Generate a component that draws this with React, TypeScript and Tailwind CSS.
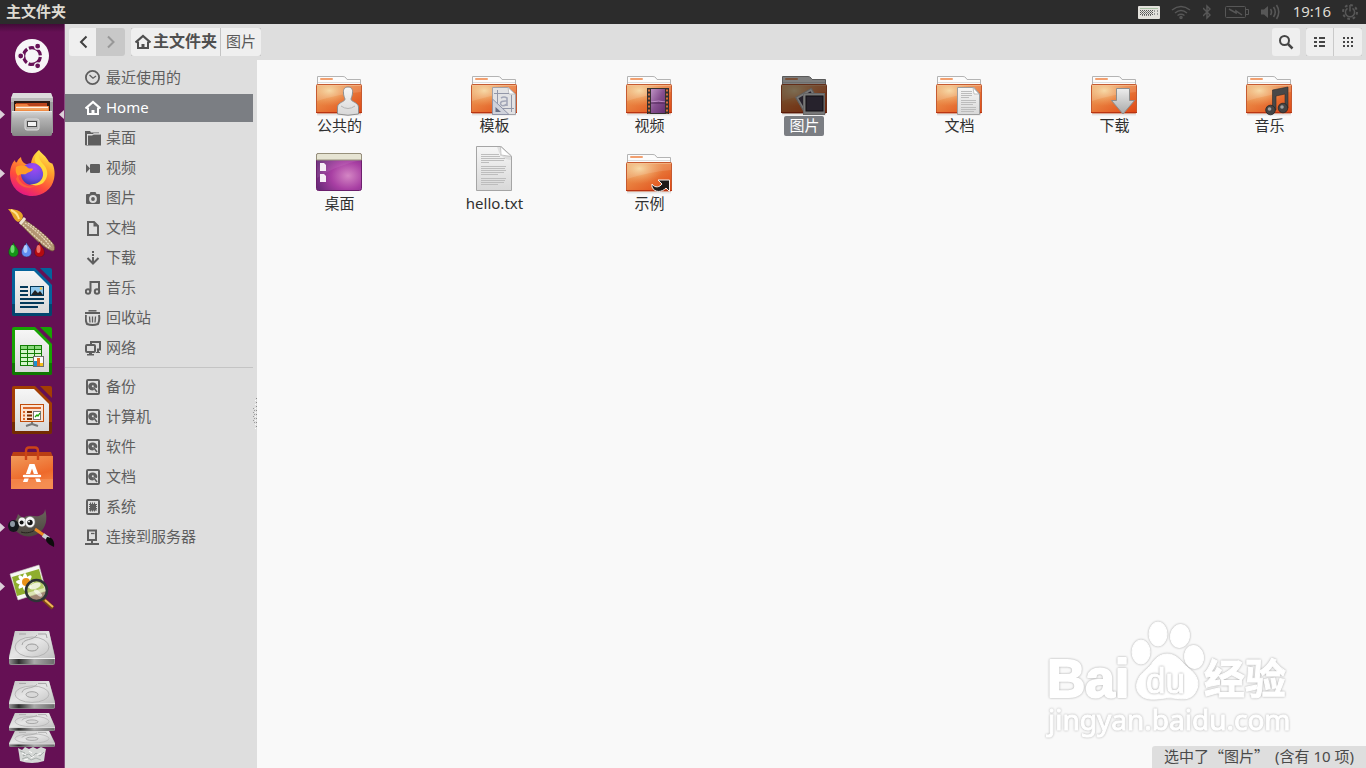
import React from "react";

/* ---------- shared helpers ---------- */

type Children = { children: React.ReactNode };

function Big({ children }: Children) {
  return (
    <svg viewBox="0 0 48 48" className="h-12 w-12 shrink-0" aria-hidden="true">
      {children}
    </svg>
  );
}

function Small({ children }: Children) {
  return (
    <svg viewBox="0 0 16 16" className="h-4 w-4 shrink-0" fill="none" stroke="currentColor" strokeWidth="2" aria-hidden="true">
      {children}
    </svg>
  );
}

function Defs() {
  return (
    <svg className="absolute h-0 w-0" aria-hidden="true">
      <defs>
        <linearGradient id="folder" x1="0" y1="0" x2="0.9" y2="1">
          <stop offset="0" stopColor="#eab06a" />
          <stop offset="0.45" stopColor="#e9803f" />
          <stop offset="1" stopColor="#e04a17" />
        </linearGradient>
        <radialGradient id="folderGlow" cx="0.28" cy="0.2" r="0.55">
          <stop offset="0" stopColor="#f6d49a" />
          <stop offset="1" stopColor="#f0a060" stopOpacity="0" />
        </radialGradient>
        <linearGradient id="paper" x1="0" y1="0" x2="0" y2="1">
          <stop offset="0" stopColor="#f6f6f6" />
          <stop offset="1" stopColor="#d8d8d8" />
        </linearGradient>
        <linearGradient id="metal" x1="0" y1="0" x2="0" y2="1">
          <stop offset="0" stopColor="#ededed" />
          <stop offset="1" stopColor="#a9a9a9" />
        </linearGradient>
        <linearGradient id="cabinet" x1="0" y1="0" x2="0" y2="1">
          <stop offset="0" stopColor="#d6d6d6" />
          <stop offset="0.3" stopColor="#b4b4b4" />
          <stop offset="1" stopColor="#868686" />
        </linearGradient>
        <linearGradient id="edge" x1="0" y1="0" x2="1" y2="0">
          <stop offset="0" stopColor="#8a8a8a" />
          <stop offset="0.2" stopColor="#2e2e2e" />
          <stop offset="0.55" stopColor="#aaaaaa" />
          <stop offset="1" stopColor="#6d6d6d" />
        </linearGradient>
        <radialGradient id="desk" cx="0.7" cy="0.6" r="0.75">
          <stop offset="0" stopColor="#d486c4" />
          <stop offset="0.5" stopColor="#a83fa3" />
          <stop offset="1" stopColor="#682a78" />
        </radialGradient>
        <linearGradient id="fox" x1="0.8" y1="0" x2="0.3" y2="1">
          <stop offset="0" stopColor="#fff44f" />
          <stop offset="0.35" stopColor="#ffa02c" />
          <stop offset="0.7" stopColor="#ff4a3d" />
          <stop offset="1" stopColor="#e31587" />
        </linearGradient>
        <radialGradient id="globe" cx="0.6" cy="0.2" r="0.9">
          <stop offset="0" stopColor="#a248f5" />
          <stop offset="0.6" stopColor="#6a4be0" />
          <stop offset="1" stopColor="#3b2f9b" />
        </radialGradient>
        <linearGradient id="bag" x1="0" y1="0" x2="0.4" y2="1">
          <stop offset="0" stopColor="#f19a5a" />
          <stop offset="0.7" stopColor="#ee6a2b" />
          <stop offset="1" stopColor="#f2803f" />
        </linearGradient>
        <linearGradient id="drive" x1="0" y1="0" x2="1" y2="1">
          <stop offset="0" stopColor="#c4c4c4" />
          <stop offset="0.5" stopColor="#e6e6e6" />
          <stop offset="1" stopColor="#c0c0c0" />
        </linearGradient>
        <linearGradient id="fur" x1="0" y1="0" x2="0" y2="1">
          <stop offset="0" stopColor="#6b655c" />
          <stop offset="1" stopColor="#4a453e" />
        </linearGradient>
        <linearGradient id="film" x1="0" y1="0" x2="1" y2="1">
          <stop offset="0" stopColor="#bd93c4" />
          <stop offset="0.5" stopColor="#86508f" />
          <stop offset="1" stopColor="#643070" />
        </linearGradient>
      </defs>
    </svg>
  );
}

/* ---------- launcher icons ---------- */

const UbuntuIcon = () => (
  <Big>
    <circle cx="24" cy="24" r="17" fill="#f7f5f7" />
    <circle cx="24" cy="24" r="8.4" fill="none" stroke="#671157" strokeWidth="3.2" strokeDasharray="15.6 2" strokeDashoffset="-1" />
    {[60, 180, 300].map((a) => {
      const r = (a * Math.PI) / 180;
      return <circle key={a} cx={24 + 11.3 * Math.cos(r)} cy={24 + 11.3 * Math.sin(r)} r="3" fill="#671157" stroke="#f7f5f7" strokeWidth="1.2" />;
    })}
  </Big>
);

const FilesIcon = () => (
  <Big>
    <path d="M5 2H43L45 8V42H3V8Z" fill="#9c9c9c" />
    <path d="M5 2H43L45 7H3Z" fill="#dcdcdc" />
    <rect x="3" y="7" width="42" height="4" fill="#b9b9b9" />
    <rect x="6" y="10" width="36" height="12" fill="#2a1a14" />
    <path d="M8 12H39V16H8Z" fill="#b8441c" />
    <path d="M7 13H19L21 15H41V20H7Z" fill="#ee7f3c" />
    <path d="M8 16.500H40" stroke="#fdf3e4" strokeWidth="1.600" />
    <path d="M8 18.500H40" stroke="#f0a557" strokeWidth="1.600" />
    <path d="M4 20H44V43Q44 45 42 45H6Q4 45 4 43Z" fill="url(#cabinet)" />
    <path d="M4 20.500H44" stroke="#e9e9e9" />
    <rect x="17" y="28" width="14" height="11" rx="2" fill="#b9b9b9" stroke="#dedede" />
    <rect x="19.500" y="30.500" width="9" height="5" fill="#f3f3f3" stroke="#4a4a4a" />
  </Big>
);

const FirefoxIcon = () => (
  <Big>
    <path d="M31 0C34 4 38 6 41 12C43 13 44 14 44 13C47 18 47 25 46 29C44 39 35 46 24 46C12 46 2 37 2 24C2 18 4 13 7 10C7 12 8 13 9 12C10 9 12 8 13 7C13 10 15 13 18 14L23 15C23 8 27 3 31 0Z" fill="url(#fox)" />
    <circle cx="24" cy="24" r="11" fill="url(#globe)" />
    <path d="M31 1C30 7 32 11 36 15C41 21 40 28 35 33C31 36 26 36 22 34C29 35 34 31 35 26C36 19 32 16 29 14C25 11 27 5 31 1Z" fill="#ffd93c" />
    <path d="M8 17C12 15 18 15 20 18C22 19 24 18 25 19C24 22 20 22 18 24C15 25 13 23 10 26C8 24 7 20 8 17Z" fill="#ff9f26" />
    <path d="M10 25C11 33 18 38 27 36C21 40 11 37 8 29Z" fill="#ff6a35" opacity="0.8" />
  </Big>
);

const BrushIcon = () => (
  <Big>
    <path d="M14 9C23 15 39 26 46 36Q48 42 44 42C35 39 21 24 12 15Z" fill="#b39672" stroke="#6d4e37" strokeWidth="0.800" />
    <path d="M17 14C26 20 37 29 43 39M15 16C23 24 33 33 41 39M20 14C29 20 39 28 45 36" stroke="#ead9bd" strokeWidth="1.200" fill="none" strokeDasharray="2 1" />
    <path d="M12 15L17 9" stroke="#eee3d2" strokeWidth="3" />
    <path d="M0 0C6 0 14 1 15 7Q14 12 10 13C5 11 5 5 0 0Z" fill="#e7a528" />
    <path d="M3 1C8 3 10 6 11 10" stroke="#ffe18a" strokeWidth="2" fill="none" />
    {[
      [5.500, "#149416", "#8cf08c"],
      [18.500, "#5f8df2", "#cfe4ff"],
      [31.500, "#b50b10", "#ff8f86"],
    ].map(([x, c, h]) => (
      <g key={String(c)} transform={`translate(${x} 33)`}>
        <path d="M0 0C1 4 5 6 5 10C5 13 3 15 0 15S-5 13-5 10C-5 6-1 4 0 0Z" fill={String(c)} stroke="#3b1235" strokeWidth="0.500" />
        <ellipse cx="-1" cy="7" rx="2" ry="4" fill={String(h)} opacity="0.750" />
      </g>
    ))}
  </Big>
);

function OfficeIcon({ color, dark, children }: { color: string; dark: string } & Children) {
  return (
    <Big>
      <path d="M6 0H27L44 17V46Q44 48 42 48H6Q4 48 4 46V2Q4 0 6 0Z" fill={color} />
      <path d="M4 36H44V46Q44 48 42 48H6Q4 48 4 46Z" fill={dark} opacity="0.600" />
      <path d="M7 3H26L41 18V45H7Z" fill="url(#paper)" />
      <path d="M32 0H42Q44 0 44 2V12Z" fill={color} />
      {children}
    </Big>
  );
}

const WriterIcon = () => (
  <OfficeIcon color="#04639b" dark="#023350">
    <path d="M12 19H20M12 23H20M12 27H20M12 31H36M12 35H36M12 39H30" stroke="#04395a" strokeWidth="2" />
    <rect x="22.500" y="18.500" width="13" height="9" fill="#8fc8ec" stroke="#04395a" />
    <path d="M23 27L27 22L30 25L32 23L35 27Z" fill="#222" />
    <circle cx="33" cy="20.500" r="1.300" fill="#f4c542" />
  </OfficeIcon>
);

const CalcIcon = () => (
  <OfficeIcon color="#18a303" dark="#0b5a02">
    <rect x="12.500" y="18.500" width="21" height="20" fill="#d4f5ca" stroke="#127d05" />
    <rect x="13" y="19" width="20" height="3" fill="#8ad97c" />
    <path d="M12 22.500H34M12 26.500H34M12 30.500H34M12 34.500H34M19.500 18V39M26.500 18V39" stroke="#127d05" />
    <rect x="25.500" y="29.500" width="10" height="10" fill="#fafafa" stroke="#6c6c6c" />
    <path d="M27.500 39V34" stroke="#1b8fd0" strokeWidth="3" />
    <path d="M30.500 39V31" stroke="#e06a1b" strokeWidth="3" />
    <path d="M33.500 39V36" stroke="#f2bf1b" strokeWidth="3" />
  </OfficeIcon>
);

const ImpressIcon = () => (
  <OfficeIcon color="#a33e03" dark="#541f01">
    <path d="M24 35V38L18 40M24 38L30 40" stroke="#777" strokeWidth="2" fill="none" />
    <rect x="12.500" y="18.500" width="23" height="17" fill="#fbe3d2" stroke="#c14c0a" />
    <path d="M15 22H33" stroke="#d9662b" strokeWidth="2" />
    <path d="M15 26H17M15 29.500H17M15 33H17" stroke="#d9662b" strokeWidth="2" />
    <path d="M19 26H24M19 29.500H24M19 33H24" stroke="#7c2d02" strokeWidth="2" />
    <rect x="25.500" y="25.500" width="7" height="8" fill="#fff" stroke="#777" />
    <path d="M27 31L29 29L30 30L32 27" stroke="#18a303" strokeWidth="1.300" fill="none" />
  </OfficeIcon>
);

const SoftwareIcon = () => (
  <Big>
    <path d="M5 7H43L45 12H3Z" fill="#b93e14" />
    <path d="M3 11H45V44H3Z" fill="url(#bag)" />
    <path d="M3 34H45V44H3Z" fill="#f79a63" opacity="0.500" />
    <path d="M18 15V6Q18 2.500 21 2.500H27Q30 2.500 30 6V15" fill="none" stroke="#cc4417" strokeWidth="2.400" />
    <path d="M21.500 19H26.500L33 37H28.500L24 23.500L19.500 37H15Z" fill="#fff" />
    <path d="M15 29H33V33.500H15Z" fill="#ee6a2b" />
    <path d="M16 31H32" stroke="#fff" strokeWidth="2.400" strokeLinecap="round" />
  </Big>
);

const GimpIcon = () => (
  <Big>
    <path d="M10 10C12 12 14 14 17 13C22 10 29 14 33 11C36 10 37 7 37 5C40 15 38 24 31 29C23 35 11 33 6 24C4 18 9 16 10 10Z" fill="url(#fur)" />
    <ellipse cx="5.500" cy="22" rx="5.500" ry="6" fill="#14181c" />
    <ellipse cx="4.500" cy="20" rx="2.500" ry="3" fill="#8d98a3" />
    <ellipse cx="14" cy="18" rx="3.700" ry="4.500" fill="#f4f4f4" />
    <circle cx="13.600" cy="18.600" r="2" fill="#111" />
    <ellipse cx="22" cy="18" rx="5" ry="5.500" fill="#fafafa" stroke="#888" strokeWidth="0.500" />
    <circle cx="22" cy="18.500" r="2.700" fill="#111" />
    <circle cx="21" cy="17.500" r="0.900" fill="#fff" />
    <path d="M13 28C19 30 25 28 28 25" stroke="#25211d" fill="none" />
    <path d="M27 25L37 32" stroke="#ec8a24" strokeWidth="3" />
    <path d="M35 31L41 35" stroke="#c9ced1" strokeWidth="4" />
    <path d="M39 33C44 33 47 37 46 43C42 41 38 39 38 35Z" fill="#0c0c0c" />
  </Big>
);

const ViewerIcon = () => (
  <Big>
    <path d="M2 11L31 2L38 28L10 37Z" fill="#f7f7f4" stroke="#c8c8c0" strokeWidth="0.600" />
    <path d="M4 14L31 6L36 25L9 33Z" fill="#8fae2e" />
    <g fill="#fff">
      {[0, 45, 90, 135].map((a) => (
        <ellipse key={a} cx="17" cy="19" rx="9" ry="2.700" transform={`rotate(${a} 17 19)`} />
      ))}
    </g>
    <circle cx="18" cy="19" r="4" fill="#e99218" />
    <path d="M35 36L45 45" stroke="#7c4a14" strokeWidth="4" />
    <path d="M37 37L45 44" stroke="#f0b65a" strokeWidth="2" />
    <circle cx="28.500" cy="27.500" r="10.500" fill="#c9d98a" fillOpacity="0.600" stroke="#2d3336" strokeWidth="2.600" />
    <ellipse cx="27" cy="23" rx="6" ry="3" fill="#fff" opacity="0.750" transform="rotate(-20 27 23)" />
    <ellipse cx="30" cy="30" rx="5" ry="2" fill="#fff" opacity="0.600" transform="rotate(40 30 30)" />
  </Big>
);

const DriveShape = () => (
  <>
    <path d="M6 0H40L46 25V32Q46 34 44 34H2Q0 34 0 32V25Z" fill="#8e8e8e" />
    <path d="M6 0H40L46 27H0Z" fill="url(#drive)" />
    <ellipse cx="23" cy="16" rx="17" ry="10" fill="none" stroke="#b4b4b4" />
    <ellipse cx="23" cy="16.500" rx="6" ry="3.500" fill="#d9d9d9" stroke="#999" />
    <path d="M10 3H17M29 3H37L38 7M13 14C14 7 24 10 28 4" stroke="#a5a5a5" fill="none" />
    <path d="M1 28H45V32Q45 33 44 33H2Q1 33 1 32Z" fill="url(#edge)" />
    <path d="M0 27.500H46" stroke="#f2f2f2" />
  </>
);

const DriveIcon = () => (
  <Big>
    <g transform="translate(1 9)">
      <DriveShape />
    </g>
  </Big>
);

const launcher = [
  { name: "Dash", Icon: UbuntuIcon, running: false, focused: false },
  { name: "文件", Icon: FilesIcon, running: true, focused: true },
  { name: "Firefox", Icon: FirefoxIcon, running: true, focused: false },
  { name: "画笔", Icon: BrushIcon, running: false, focused: false },
  { name: "Writer", Icon: WriterIcon, running: false, focused: false },
  { name: "Calc", Icon: CalcIcon, running: false, focused: false },
  { name: "Impress", Icon: ImpressIcon, running: false, focused: false },
  { name: "软件中心", Icon: SoftwareIcon, running: false, focused: false },
  { name: "GIMP", Icon: GimpIcon, running: true, focused: false },
  { name: "图像查看器", Icon: ViewerIcon, running: true, focused: false },
  { name: "磁盘", Icon: DriveIcon, running: false, focused: false },
];

function Launcher() {
  return (
    <nav aria-label="启动器" className="flex w-[65px] shrink-0 flex-col items-center overflow-hidden border-r border-[#884a7e] bg-[#651054] bg-linear-to-b from-[#430a38] from-0% to-[#651054] to-[8px] pt-[2px]">
      {launcher.map(({ name, Icon, running, focused }) => (
        <button key={name} aria-label={name} className="relative flex h-[59px] w-full shrink-0 justify-center pt-[6px]">
          {running && (
            <svg viewBox="0 0 5 9" className="absolute top-[25px] left-0 h-[9px] w-[5px]" aria-hidden="true">
              <path d="M0 0L5 4.500L0 9Z" fill="#dccfd9" />
            </svg>
          )}
          <Icon />
          {focused && (
            <svg viewBox="0 0 5 9" className="absolute top-[25px] right-0 h-[9px] w-[5px]" aria-hidden="true">
              <path d="M5 0L0 4.500L5 9Z" fill="#dccfd9" />
            </svg>
          )}
        </button>
      ))}
      <button aria-label="磁盘 2" className="shrink-0 pt-[6px]">
        <svg viewBox="0 0 46 34" preserveAspectRatio="none" className="h-[28px] w-[46px]"><DriveShape /></svg>
      </button>
      <button aria-label="磁盘 3" className="shrink-0 pt-1">
        <svg viewBox="0 0 46 34" preserveAspectRatio="none" className="h-[18px] w-[46px]"><DriveShape /></svg>
      </button>
      <button aria-label="磁盘 4" className="shrink-0">
        <svg viewBox="0 0 46 34" preserveAspectRatio="none" className="h-[16px] w-[46px]"><DriveShape /></svg>
      </button>
      <button aria-label="回收站" className="shrink-0">
        <svg viewBox="0 0 30 16" className="h-[16px] w-[30px]">
          <path d="M1 1L5 3L8 0L12 2L16 0L20 2L24 0L29 2L28 7L27 14Q15 18 3 14L2 7Z" fill="#d5d8d6" />
          <path d="M3 4L8 6L6 9L12 7L15 10L19 6L23 9L27 5M5 12L10 10L14 13L19 11L24 13" stroke="#a9afad" fill="none" />
          <path d="M5 6L9 8M12 4L15 6M20 8L24 6M14 11L17 9M7 13L11 12" stroke="#fff" fill="none" />
        </svg>
      </button>
    </nav>
  );
}

/* ---------- top panel ---------- */

function TopPanel() {
  return (
    <header className="flex h-6 shrink-0 items-center bg-[#2c2c2c] px-[6px] text-[15px] leading-[22px] text-[#dfdbd2]">
      <h1 className="pb-[2px] font-bold">主文件夹</h1>
      <div className="ml-auto flex items-center text-[#575757]">
        <svg viewBox="0 0 22 13" className="mr-[11px] h-[13px] w-[22px]" aria-label="键盘">
          <rect width="22" height="13" rx="1" fill="#e3e1dc" />
          <path d="M2 4.500H15M2 6.500H15M2 8.500H15" stroke="#555" strokeDasharray="1 1" />
          <path d="M3 5.500H15M3 7.500H15M4 9.500H13" stroke="#777" strokeDasharray="1 1" />
          <path d="M16.500 4V10M19.500 4V10" stroke="#999" strokeDasharray="2 1" />
          <path d="M2 2.500H20" stroke="#a9c2a5" />
        </svg>
        <svg viewBox="0 0 20 16" className="mr-[12px] h-[16px] w-[20px]" fill="none" stroke="currentColor" strokeWidth="1.500" aria-label="无线">
          <path d="M1 6Q10-1 19 6M4 9Q10 4 16 9M6.500 11.500Q10 9 13.500 11.500" />
          <circle cx="10" cy="13.500" r="1" />
        </svg>
        <svg viewBox="0 0 8 16" className="mr-[14px] h-[16px] w-[8px]" fill="none" stroke="currentColor" strokeWidth="1.500" aria-label="蓝牙">
          <path d="M0 4L7 11L4 14V2L7 5L0 12" />
        </svg>
        <svg viewBox="0 0 24 12" className="mr-[12px] h-[12px] w-[24px]" fill="none" stroke="currentColor" aria-label="电池">
          <rect x="0.500" y="0.500" width="20" height="11" rx="1" />
          <path d="M21 3.500H23.500V8.500H21" />
          <path d="M4 3L11 7V5L17 9" strokeWidth="1.500" />
        </svg>
        <svg viewBox="0 0 20 16" className="mr-[12px] h-[16px] w-[20px]" fill="none" stroke="currentColor" aria-label="音量">
          <path d="M0 5.500H3L7 2V14L3 10.500H0Z" fill="currentColor" stroke="none" />
          <path d="M9.500 5Q11.500 8 9.500 11M12.500 3Q16 8 12.500 13M15.500 1Q20 8 15.500 15" strokeWidth="1.600" />
        </svg>
        <time className="mr-[11px] pb-[2px] text-[#dfdbd2]">19:16</time>
        <svg viewBox="0 0 16 16" className="mr-[2px] h-[16px] w-[16px]" fill="none" stroke="currentColor" aria-label="系统">
          <circle cx="8" cy="8" r="7" strokeWidth="2" strokeDasharray="2.700 2.800" />
          <path d="M5.500 4.300A4.600 4.600 0 1 0 10.500 4.300M8 1V7.500" strokeWidth="1.500" />
        </svg>
      </div>
    </header>
  );
}

/* ---------- symbolic icons ---------- */

const homeIcon = (
  <Small>
    <path d="M0.500 8.500L8 2L15.500 8.500" strokeWidth="2.300" />
    <path d="M3 7.500V14H13V7.500" />
    <path d="M6.500 15V10H9.500V15Z" fill="currentColor" stroke="none" />
  </Small>
);
const diskIcon = (
  <Small>
    <rect x="2" y="1" width="12" height="14" rx="1" />
    <path d="M8 3.500A4 4 0 1 0 9 11L8.500 8.500L12 9A4 4 0 0 0 8 3.500Z" fill="currentColor" stroke="none" />
    <circle cx="7.800" cy="7.300" r="1" fill="#dedede" stroke="none" />
    <path d="M9 9L12 13" strokeWidth="1.500" />
  </Small>
);

type Place = { key: string; label: string; icon: React.ReactNode; current?: boolean };

const places: Place[] = [
  {
    key: "recent",
    label: "最近使用的",
    icon: (
      <Small>
        <circle cx="7.500" cy="7.500" r="6.600" strokeWidth="1.800" />
        <path d="M4.500 5L8 8.200L11 6" strokeWidth="1.300" />
      </Small>
    ),
  },
  { key: "home", label: "Home", icon: homeIcon, current: true },
  {
    key: "desktop",
    label: "桌面",
    icon: (
      <Small>
        <path d="M0 1H5L6 2.500H14V4H2V15H0Z" fill="currentColor" stroke="none" />
        <path d="M3 5H7L8 4.500H16V15.500H0.500V5Z" fill="currentColor" stroke="none" />
        <path d="M2.500 15V5H7.500L8.500 3.700H15" stroke="#dedede" strokeWidth="1" />
      </Small>
    ),
  },
  {
    key: "videos",
    label: "视频",
    icon: (
      <Small>
        <rect x="5" y="4" width="10" height="9" rx="1" fill="currentColor" stroke="none" />
        <path d="M1 4L5 8.500L1 13Z" fill="currentColor" stroke="none" />
      </Small>
    ),
  },
  {
    key: "pictures",
    label: "图片",
    icon: (
      <Small>
        <path d="M2 4H4.500L5.500 2H10.500L11.500 4H14Q15 4 15 5V13Q15 14 14 14H2Q1 14 1 13V5Q1 4 2 4Z" fill="currentColor" stroke="none" />
        <circle cx="8" cy="9" r="2.900" stroke="#dedede" strokeWidth="2" />
      </Small>
    ),
  },
  {
    key: "documents",
    label: "文档",
    icon: (
      <Small>
        <path d="M3 2H9L13 6V15H3Z" />
        <path d="M8.500 2V6.500H13Z" fill="currentColor" stroke="none" />
      </Small>
    ),
  },
  {
    key: "downloads",
    label: "下载",
    icon: (
      <Small>
        <path d="M8 1V7" strokeDasharray="2 1" />
        <path d="M8 7V13M2.500 8L8 13.500L13.500 8" />
      </Small>
    ),
  },
  {
    key: "music",
    label: "音乐",
    icon: (
      <Small>
        <circle cx="3" cy="11.500" r="2.200" />
        <circle cx="12" cy="11.500" r="2.200" />
        <path d="M5.500 11.500V2H14V11.500" />
      </Small>
    ),
  },
  {
    key: "trash",
    label: "回收站",
    icon: (
      <Small>
        <path d="M0 3H15" />
        <path d="M3.500 0.800H11.500" strokeWidth="1.500" />
        <path d="M1 5Q0 10 2 14Q7.500 16 13 14Q15 10 14 5" strokeWidth="2" />
        <path d="M4.500 6.500L5 12.500M7.500 6.500V12.500M10.500 6.500L10 12.500" strokeWidth="1.300" />
      </Small>
    ),
  },
  {
    key: "network",
    label: "网络",
    icon: (
      <Small>
        <path d="M6 4V2H15V9.500H12" />
        <rect x="1" y="5" width="9" height="7" rx="1" />
        <path d="M4 13H7V14H9V15.500H2V14H4ZM12 10H14V12H15V13H11V12H12Z" fill="currentColor" stroke="none" />
      </Small>
    ),
  },
];

const devices: Place[] = [
  { key: "backup", label: "备份", icon: diskIcon },
  { key: "computer", label: "计算机", icon: diskIcon },
  { key: "soft", label: "软件", icon: diskIcon },
  { key: "docs", label: "文档", icon: diskIcon },
  {
    key: "system",
    label: "系统",
    icon: (
      <Small>
        <rect x="2" y="1" width="12" height="14" rx="1" />
        <rect x="5" y="5" width="6" height="6" fill="currentColor" stroke="none" />
        <path d="M5.500 3.500V12.500M7.500 3.500V12.500M9.500 3.500V12.500M4 5.500H12M4 7.500H12M4 9.500H12M4 11H12" strokeWidth="1.100" />
      </Small>
    ),
  },
  {
    key: "server",
    label: "连接到服务器",
    icon: (
      <Small>
        <path d="M3 1.500H11V11H3ZM7 11V14M0 15H14" />
        <path d="M6 4.500H9.500" strokeWidth="1.300" />
      </Small>
    ),
  },
];

function PlaceList({ items }: { items: Place[] }) {
  return (
    <ul className="flex flex-col gap-[2px]">
      {items.map(({ key, label, icon, current }) => (
        <li key={key}>
          <button
            aria-current={current ? "page" : undefined}
            className={
              current
                ? "flex h-7 w-full items-center gap-[5px] bg-[#7b7e83] pl-5 text-white"
                : "flex h-7 w-full items-center gap-[5px] pl-5 text-[#5e5e5e]"
            }
          >
            {icon}
            <span className="pb-[2px]">{label}</span>
          </button>
        </li>
      ))}
    </ul>
  );
}

function Sidebar() {
  return (
    <aside className="flex w-[192px] shrink-0 bg-[#dedede] text-[15px] leading-5">
      <nav aria-label="位置" className="flex-1 pt-1">
        <PlaceList items={places} />
        <hr className="mt-[5px] mb-[5px] border-[#c4c4c4]" />
        <PlaceList items={devices} />
      </nav>
      <svg viewBox="0 0 4 34" className="h-[34px] w-1 shrink-0 self-center" aria-hidden="true">
        <path d="M3.500 1V33" stroke="#8c8c8c" strokeDasharray="1 3" />
        <path d="M2.500 3V33" stroke="#fafafa" strokeDasharray="1 3" />
        <path d="M0.500 11V24M1.500 13V26" stroke="#9b9b9b" strokeDasharray="1 3" />
      </svg>
    </aside>
  );
}

/* ---------- toolbar ---------- */

function Toolbar() {
  return (
    <div className="flex h-9 shrink-0 items-center bg-[#dedede] px-1 text-[15px] text-[#5a5a5a]">
      <div className="flex">
        <button aria-label="后退" className="flex h-7 w-[27px] items-center justify-center rounded-l-[3px] bg-[#efefef] pl-[2px] text-[#404040]">
          <Small>
            <path d="M10.500 2.500L5 8L10.500 13.500" />
          </Small>
        </button>
        <button aria-label="前进" disabled className="flex h-7 w-[29px] items-center justify-center rounded-r-[3px] bg-[#c8c8c8] text-[#989898]">
          <Small>
            <path d="M5 2.500L10.500 8L5 13.500" />
          </Small>
        </button>
      </div>
      <nav aria-label="路径" className="ml-[6px] flex gap-px bg-[#c4c4c4]">
        <button className="flex h-7 items-center gap-[2px] rounded-l-[3px] bg-[#efefef] pr-[3px] pl-1 text-[16px] font-bold text-[#4f4f4f]">
          {homeIcon}
          <span className="pb-[2px]">主文件夹</span>
        </button>
        <button className="flex h-7 items-center rounded-r-[3px] bg-[#efefef] px-[5px] pb-[2px]">图片</button>
      </nav>
      <button aria-label="搜索" className="ml-auto flex h-7 w-7 items-center justify-center rounded-[3px] bg-[#efefef] text-[#454545]">
        <Small>
          <circle cx="6.500" cy="6.500" r="4.500" />
          <path d="M10 10L14.500 14.500" strokeWidth="2.500" />
        </Small>
      </button>
      <div className="ml-[6px] flex gap-px bg-[#cacaca]">
        <button aria-label="列表视图" className="flex h-7 w-[27px] items-center justify-center rounded-l-[3px] bg-[#efefef] text-[#454545]">
          <Small>
            <path d="M2 4H5M7 4H13M2 8H5M7 8H13M2 12H5M7 12H13" />
          </Small>
        </button>
        <button aria-label="图标视图" className="flex h-7 w-7 items-center justify-center rounded-r-[3px] bg-[#efefef] text-[#454545]">
          <Small>
            <path d="M3 4H13M3 8H13M3 12H13" strokeDasharray="2 2" />
          </Small>
        </button>
      </div>
    </div>
  );
}

/* ---------- files ---------- */

function Folder({ children }: { children?: React.ReactNode }) {
  return (
    <Big>
      <path d="M2 46.500H46" stroke="#000" opacity="0.080" strokeWidth="2" />
      <path d="M2.500 17V8.500H28Q30 8.500 31 10L32 11.500H45.500V17Z" fill="#fcfcfc" stroke="#b4b4b4" />
      <path d="M3 14.500H45" stroke="#dcdcdc" />
      <rect x="5" y="10" width="13" height="2" rx="1" fill="#f2a070" />
      <rect x="1.500" y="16.500" width="45" height="28.500" rx="1" fill="url(#folder)" stroke="#c65a30" />
      <rect x="2" y="17" width="44" height="28" fill="url(#folderGlow)" />
      <path d="M2 17H46V24Q24 26 2 33Z" fill="#fff" opacity="0.130" />
      <path d="M2 17.500H46" stroke="#f6c59a" opacity="0.600" />
      <path d="M1 44.500H47" stroke="#b93412" />
      {children}
    </Big>
  );
}

const PublicIcon = () => (
  <Folder>
    <path d="M33 19C36.500 19 38 21.500 37.500 25C37.300 28 36.500 29 36 31C36 34 43 34 43.500 39V46Q33 48.500 22.500 46V39C23 34 30 34 30 31C29.500 29 28.500 28 28.500 25C28 21.500 29.500 19 33 19Z" fill="url(#paper)" stroke="#8e8e8e" />
    <path d="M26 38Q33 43 40 38" stroke="#b5b5b5" fill="none" />
  </Folder>
);

const TemplatesIcon = () => (
  <Folder>
    <path d="M22.500 19.500H38L45.500 26V46.500H22.500Z" fill="#e2e2e4" stroke="#a2a2a8" />
    <path d="M38 19.500L45 26H39Z" fill="#fff" stroke="#b5b5b8" strokeWidth="0.800" />
    <path d="M27.500 22V43M41.500 27V44M24 25.500H39M27 40.500H44" stroke="#9397a8" />
    <path d="M31 30Q34 28 37 30V38M37 33Q30 32.500 30.500 36Q32 39.500 37 36" stroke="#a3a7b8" strokeWidth="1.600" fill="none" />
    <path d="M22.500 31L39 46.500H22.500Z" fill="#cfd2db" stroke="#8f94a8" />
    <path d="M25.500 39L31 44H25.500Z" fill="#6a7086" />
  </Folder>
);

const VideosIcon = () => (
  <Folder>
    <rect x="22" y="20" width="22" height="26" fill="#35302f" />
    <path d="M24 21.500V46M42 21.500V46" stroke="#d8713d" strokeWidth="2" strokeDasharray="2 2" />
    <rect x="26" y="21" width="14" height="24" fill="url(#film)" />
    <path d="M26 34Q34 32 40 34" stroke="#d3a6d8" fill="none" opacity="0.700" />
    <path d="M26 35H40" stroke="#4c2554" />
  </Folder>
);

const PicturesIcon = () => (
  <Folder>
    <g transform="rotate(-30 27 31)">
      <rect x="18" y="24" width="18" height="16" fill="#f0f0f0" stroke="#bbb" />
      <rect x="20" y="26" width="14" height="12" fill="#4c4358" />
    </g>
    <rect x="23.500" y="25.500" width="21" height="21" fill="#f0f0f0" stroke="#ccc" />
    <rect x="26" y="28" width="17" height="15" fill="#4c4358" stroke="#1c1a20" />
  </Folder>
);

const DocumentsIcon = () => (
  <Folder>
    <path d="M22.500 19.500H39L44.500 26V46.500H22.500Z" fill="url(#paper)" stroke="#9e9e9e" />
    <path d="M38 19.500L44 26H39Z" fill="#fff" stroke="#aaa" strokeWidth="0.700" />
    <path d="M26 23.500H37M26 25.500H37M26 27.500H37M26 29.500H34M26 32.500H41M26 34.500H41M26 36.500H38M26 39.500H41M26 41.500H41M26 43.500H39" stroke="#bcbcbc" />
  </Folder>
);

const DownloadsIcon = () => (
  <Folder>
    <path d="M26.500 20.500H39.500V32.500H44.500L33 46L21.500 32.500H26.500Z" fill="url(#metal)" stroke="#8d8d8d" />
  </Folder>
);

const MusicIcon = () => (
  <Folder>
    <path d="M27.500 22L43 19V40H40V26L31 28V42H27.500Z" fill="#484848" stroke="#2c2c2c" strokeWidth="0.600" />
    <circle cx="25.500" cy="42" r="4.800" fill="#454545" stroke="#262626" strokeWidth="0.800" />
    <circle cx="38" cy="40" r="4.800" fill="#454545" stroke="#262626" strokeWidth="0.800" />
    <circle cx="24.500" cy="41" r="1.800" fill="#a0a0a0" />
    <circle cx="37" cy="39" r="1.800" fill="#a0a0a0" />
  </Folder>
);

const DesktopIcon = () => (
  <Big>
    <rect x="1.500" y="7.500" width="45" height="37" rx="2" fill="url(#desk)" stroke="#6c1f6d" />
    <path d="M2 32V14H46Q20 20 2 32Z" fill="#fff" opacity="0.080" />
    <path d="M1.500 14V9Q1.500 7.500 3 7.500H45Q46.500 7.500 46.500 9V14Z" fill="#e6e4d3" stroke="#97917c" />
    <path d="M5 17H9L11 19V25H5ZM5 28H9L11 30V36H5Z" fill="#f6edf6" />
  </Big>
);

const TextFileIcon = () => (
  <Big>
    <path d="M6.500 0.500H31L41.500 10V44.500H6.500Z" fill="url(#paper)" stroke="#a5a5a5" />
    <path d="M30 1V10H41V14Q30 13 27 1Z" fill="#bbb" opacity="0.350" />
    <path d="M30.500 0.500L41.500 10.500L31 9Z" fill="#fff" stroke="#b5b5b5" strokeWidth="0.800" />
    <path d="M11 8.500H29M11 10.500H30M11 12.500H35M11 14.500H34M11 16.500H19M11 20.500H36M11 22.500H35M11 24.500H36M11 26.500H34M11 28.500H28M11 32.500H36M11 34.500H35M11 36.500H34M11 38.500H28" stroke="#bdbdbd" />
  </Big>
);

const ExamplesIcon = () => (
  <Folder>
    <path d="M33 34H44.500V45.500L41 42C37 46.500 29.500 47 27 41V38C30 42.500 35 41 37 38Z" fill="#1d1a19" stroke="#f5f0ed" strokeWidth="1" />
  </Folder>
);

const files = [
  { name: "公共的", Icon: PublicIcon },
  { name: "模板", Icon: TemplatesIcon },
  { name: "视频", Icon: VideosIcon },
  { name: "图片", Icon: PicturesIcon, selected: true },
  { name: "文档", Icon: DocumentsIcon },
  { name: "下载", Icon: DownloadsIcon },
  { name: "音乐", Icon: MusicIcon },
  { name: "桌面", Icon: DesktopIcon },
  { name: "hello.txt", Icon: TextFileIcon },
  { name: "示例", Icon: ExamplesIcon },
];

function FileGrid() {
  return (
    <div className="grid grid-cols-[repeat(auto-fill,154px)] gap-x-px gap-y-[10px] pt-2 pl-[5px]">
      {files.map(({ name, Icon, selected }) => (
        <button key={name} aria-pressed={!!selected} className="flex flex-col items-center">
          <span className={selected ? "brightness-50" : ""}>
            <Icon />
          </span>
          <span
            className={
              selected
                ? "h-5 rounded-[2px] bg-[#7b7e83] pr-1 pl-[5px] text-[15px] leading-[18px] text-white"
                : "h-5 pr-1 pl-[5px] text-[15px] leading-[18px] text-[#303030]"
            }
          >
            {name}
          </span>
        </button>
      ))}
    </div>
  );
}

function Watermark() {
  return (
    <svg
      viewBox="0 0 260 130"
      className="pointer-events-none absolute right-[64px] bottom-[22px] h-[130px] w-[260px] font-['Noto_Sans','Noto_Sans_CJK_SC',sans-serif]"
      fill="#ffffff"
      stroke="#ffffff"
      strokeWidth="2"
      strokeLinejoin="round"
    >
      <text x="5" y="81" fontSize="53" fontWeight="700" fontFamily="Liberation Sans" className="[filter:drop-shadow(0_0_1px_#a8a8a8)]">Bai</text>
      <g strokeWidth="1" className="[filter:drop-shadow(0_0_1px_#a8a8a8)]">
        <ellipse cx="99" cy="36" rx="9" ry="12" />
        <ellipse cx="116" cy="18" rx="9" ry="12" />
        <ellipse cx="138" cy="20" rx="9.500" ry="11.500" transform="rotate(10 138 20)" />
        <ellipse cx="152" cy="41" rx="9.500" ry="11.500" transform="rotate(-10 152 41)" />
        <path d="M125 38C135 38 139 46 146 52C156 59 158 68 154 75C150 85 139 83 131 82C122 81 116 84 108 83C97 82 92 73 96 64C99 56 107 53 111 46Q117 38 125 38Z" />
      </g>
      <text x="104" y="77" fontSize="35" fontFamily="Liberation Sans" strokeWidth="1" className="[filter:drop-shadow(0_0_1px_#a0a0a0)]">du</text>
      <text x="162" y="78" fontSize="41" fontWeight="700" fontFamily="Noto Sans CJK SC" strokeWidth="1" className="[filter:drop-shadow(0_0_1px_#a8a8a8)]">经验</text>
      <text x="6" y="114" fontSize="28" strokeWidth="1" className="[filter:drop-shadow(0_0_1px_#b0b0b0)]">jingyan.baidu.com</text>
    </svg>
  );
}

export default function App() {
  return (
    <div lang="zh-CN" className="flex h-screen flex-col overflow-hidden font-['Noto_Sans','Noto_Sans_CJK_SC',sans-serif]">
      <Defs />
      <TopPanel />
      <div className="flex min-h-0 flex-1">
        <Launcher />
        <div className="flex min-w-0 flex-1 flex-col">
          <Toolbar />
          <div className="flex min-h-0 flex-1">
            <Sidebar />
            <main className="relative flex min-w-0 flex-1 flex-col bg-[#f9f9f9]">
              <FileGrid />
              <Watermark />
              <footer className="mt-auto flex h-[22px] items-center gap-[2px] self-end rounded-tl-[3px] bg-[#dedede] px-3 pb-[2px] text-[15px] leading-5 whitespace-pre text-[#4a4a4a]">
                <span className="font-['Noto_Sans_CJK_SC',sans-serif]">选中了“图片”</span>
                <span> (含有 10 项)</span>
              </footer>
            </main>
          </div>
        </div>
      </div>
    </div>
  );
}
